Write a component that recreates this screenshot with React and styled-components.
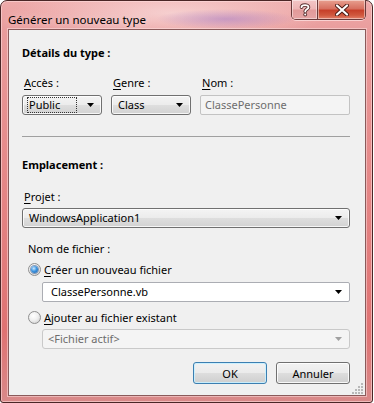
import React from "react";
import styled, { createGlobalStyle, css } from "styled-components";

const Global = createGlobalStyle`
  html, body { margin: 0; padding: 0; background: #ffffff; }
  body { font-family: "Noto Sans", "Open Sans", sans-serif; font-size: 11px; color: #000; }
  * { box-sizing: border-box; }
`;

const Window = styled.div`
  position: relative;
  width: 373px;
  height: 403px;
  border: 1px solid #4a2626;
  border-radius: 7px 7px 3px 3px;
  background:
    radial-gradient(ellipse 70px 10px at 225px 18px, rgba(150, 110, 200, 0.45), rgba(150,110,200,0) 100%),
    radial-gradient(ellipse 160px 30px at 170px 12px, rgba(250, 225, 225, 0.7), rgba(250,225,225,0) 100%),
    linear-gradient(180deg, #eeaaaa 0px, #e99c9c 30px, #e48484 200px, #df7272 330px, #d88a8a 403px);
  box-shadow: inset 0 0 0 1px rgba(255, 220, 220, 0.6);
  display: flex;
  flex-direction: column;
  padding: 0 6px 6px 7px;
`;

const TitleBar = styled.div`
  height: 28px;
  display: flex;
  align-items: flex-start;
  justify-content: space-between;
`;

const Title = styled.div`
  font-family: "Noto Sans", sans-serif;
  font-size: 11.5px;
  color: #000;
  margin-top: 11px;
  text-shadow: 0 0 8px rgba(255, 240, 240, 0.9);
`;

const Caption = styled.div`
  display: flex;
  margin-top: -1px;
  border: 1px solid #6a3a3a;
  border-top: none;
  border-radius: 0 0 5px 5px;
  overflow: hidden;
  height: 20px;
  box-shadow: 0 1px 0 rgba(255, 230, 230, 0.7);
`;

const CapBtn = styled.div`
  height: 100%;
  display: flex;
  align-items: center;
  justify-content: center;
  box-shadow: inset 0 0 0 1px rgba(255, 255, 255, 0.45);
  ${(p) =>
    p.$close
      ? css`
          width: 47px;
          background: linear-gradient(180deg, #e8a090 0%, #d77060 45%, #c7402a 55%, #d0583e 80%, #e4806a 100%);
        `
      : css`
          width: 26px;
          border-right: 1px solid #6a3a3a;
          background: linear-gradient(180deg, #f3c6c6 0%, #eeb6b6 45%, #e29a9a 55%, #e6a4a4 100%);
        `}
`;

const Client = styled.div`
  position: relative;
  flex: 1;
  background: #f0f0f0;
  border: 1px solid #8a5a5a;
  box-shadow: 0 0 0 1px rgba(255, 230, 230, 0.5);
  padding: 15px 15px 0 13px;
  display: flex;
  flex-direction: column;
`;

const SectionTitle = styled.div`
  font-weight: bold;
  height: 16px;
  line-height: 16px;
  margin-top: ${(p) => p.$mt || 0}px;
`;

const Label = styled.div`
  height: 16px;
  line-height: 16px;
  padding-left: ${(p) => (p.$indent ? 6 : 2)}px;
  margin-top: ${(p) => p.$mt || 0}px;
`;

const Key = styled.span`
  text-decoration: underline;
  text-underline-offset: 2px;
`;

const FieldsRow = styled.div`
  display: grid;
  grid-template-columns: 80px 80px 1fr;
  column-gap: 9px;
  margin-top: 14px;
`;

const Field = styled.div`
  display: flex;
  flex-direction: column;
  gap: 4px;
`;

const Combo = styled.div`
  height: 20px;
  border-radius: 3px;
  display: flex;
  align-items: center;
  justify-content: space-between;
  padding: 0 7px 0 4px;
  margin-top: ${(p) => p.$mt || 0}px;
  margin-left: ${(p) => p.$ml || 0}px;
  ${(p) =>
    p.$variant === "edit"
      ? css`
          background: #ffffff;
          border: 1px solid #abadb3;
          border-radius: 2px;
          padding-left: 6px;
        `
      : p.$variant === "disabled"
      ? css`
          background: #f4f4f4;
          border: 1px solid #c9c9c9;
          color: #6d6d6d;
          padding-left: 3px;
        `
      : css`
          background: linear-gradient(180deg, #f4f4f4 0%, #ececec 48%, #dedede 52%, #d2d2d2 100%);
          border: 1px solid #707070;
          box-shadow: inset 0 0 0 1px rgba(255, 255, 255, 0.8);
        `}
`;

const ComboText = styled.span`
  line-height: 14px;
  padding: 0 1px;
  border: 1px dotted ${(p) => (p.$focus ? "#333" : "transparent")};
  flex: ${(p) => (p.$focus ? 1 : "none")};
  margin-right: ${(p) => (p.$focus ? 10 : 0)}px;
`;

const TextBox = styled.div`
  height: 20px;
  border: 1px solid #c3c3c3;
  border-radius: 2px;
  background: #f4f4f4;
  color: #6d6d6d;
  line-height: 18px;
  padding-left: 4px;
`;

const Separator = styled.div`
  height: 1px;
  background: #a0a0a0;
  margin-top: 21px;
`;

const RadioRow = styled.div`
  display: flex;
  align-items: center;
  gap: 3px;
  height: 16px;
  margin-top: ${(p) => p.$mt || 0}px;
  padding-left: 6px;
`;

const RadioCircle = styled.div`
  width: 13px;
  height: 13px;
  border-radius: 50%;
  border: 1px solid #8f8f8f;
  background: radial-gradient(circle at 40% 35%, #ffffff 0%, #f0f0f0 45%, #c8c8c8 100%);
  display: flex;
  align-items: center;
  justify-content: center;
`;

const RadioDot = styled.div`
  width: 7px;
  height: 7px;
  border-radius: 50%;
  background: radial-gradient(circle at 40% 35%, #cde8ff 0%, #3d95e0 45%, #1c5ea8 100%);
  box-shadow: 0 0 0 1px rgba(30, 70, 130, 0.5);
`;

const ButtonRow = styled.div`
  display: flex;
  justify-content: flex-end;
  gap: 9px;
  margin-top: 13px;
`;

const Button = styled.div`
  width: 74px;
  height: 22px;
  border-radius: 3px;
  display: flex;
  align-items: center;
  justify-content: center;
  border: 1px solid ${(p) => (p.$default ? "#3c7fb1" : "#707070")};
  background: linear-gradient(180deg, #f2f2f2 0%, #ebebeb 48%, #dddddd 52%, #cfcfcf 100%);
  box-shadow: inset 0 0 0 1px ${(p) => (p.$default ? "rgba(200,240,255,0.9)" : "rgba(255,255,255,0.85)")};
`;

const Grip = styled.svg`
  position: absolute;
  right: 1px;
  bottom: 1px;
`;

const Arrow = ({ color = "#000" }) => (
  <svg width="7" height="4" viewBox="0 0 7 4">
    <path d="M0 0 H7 L3.5 4 Z" fill={color} />
  </svg>
);

const Radio = ({ checked }) => (
  <RadioCircle>{checked && <RadioDot />}</RadioCircle>
);

export default function App() {
  return (
    <>
      <Global />
      <Window>
        <TitleBar>
          <Title>Générer un nouveau type</Title>
          <Caption>
            <CapBtn>
              <svg width="12" height="14" viewBox="0 0 12 14">
                <path
                  d="M2.5 4.2 C2.5 1.5 9.5 1.2 9.5 4.2 C9.5 6.2 6.2 6.4 6.2 8.6"
                  fill="none"
                  stroke="#5a3030"
                  strokeWidth="3.6"
                  strokeLinecap="round"
                />
                <circle cx="6.2" cy="11.6" r="1.9" fill="#5a3030" />
                <path
                  d="M2.5 4.2 C2.5 1.5 9.5 1.2 9.5 4.2 C9.5 6.2 6.2 6.4 6.2 8.6"
                  fill="none"
                  stroke="#ffffff"
                  strokeWidth="1.8"
                  strokeLinecap="round"
                />
                <circle cx="6.2" cy="11.6" r="1" fill="#ffffff" />
              </svg>
            </CapBtn>
            <CapBtn $close>
              <svg width="14" height="12" viewBox="0 0 14 12">
                <path d="M2 1.5 L12 10.5 M12 1.5 L2 10.5" stroke="#4a1a14" strokeWidth="4" strokeLinecap="round" />
                <path d="M2 1.5 L12 10.5 M12 1.5 L2 10.5" stroke="#ffffff" strokeWidth="2.2" strokeLinecap="round" />
              </svg>
            </CapBtn>
          </Caption>
        </TitleBar>

        <Client>
          <SectionTitle>Détails du type :</SectionTitle>
          <FieldsRow>
            <Field>
              <Label>
                <Key>A</Key>ccès :
              </Label>
              <Combo>
                <ComboText $focus>Public</ComboText>
                <Arrow />
              </Combo>
            </Field>
            <Field>
              <Label>
                <Key>G</Key>enre :
              </Label>
              <Combo>
                <ComboText>Class</ComboText>
                <Arrow />
              </Combo>
            </Field>
            <Field>
              <Label>
                <Key>N</Key>om :
              </Label>
              <TextBox>ClassePersonne</TextBox>
            </Field>
          </FieldsRow>

          <Separator />

          <SectionTitle $mt={20}>Emplacement :</SectionTitle>
          <Label $mt={16}>
            <Key>P</Key>rojet :
          </Label>
          <Combo $mt={3}>
            <ComboText>WindowsApplication1</ComboText>
            <Arrow />
          </Combo>

          <Label $mt={13} $indent>
            Nom de fichier :
          </Label>
          <RadioRow $mt={4}>
            <Radio checked />
            <span>
              <Key>C</Key>réer un nouveau fichier
            </span>
          </RadioRow>
          <Combo $variant="edit" $mt={5} $ml={20}>
            <ComboText>ClassePersonne.vb</ComboText>
            <Arrow />
          </Combo>
          <RadioRow $mt={7}>
            <Radio />
            <span>
              <Key>A</Key>jouter au fichier existant
            </span>
          </RadioRow>
          <Combo $variant="disabled" $mt={4} $ml={20}>
            <ComboText>&lt;Fichier actif&gt;</ComboText>
            <Arrow color="#a0a0a0" />
          </Combo>

          <ButtonRow>
            <Button $default>OK</Button>
            <Button>Annuler</Button>
          </ButtonRow>

          <Grip width="12" height="12" viewBox="0 0 12 12">
            {[
              [9, 1],
              [9, 4],
              [6, 4],
              [9, 7],
              [6, 7],
              [3, 7],
              [9, 10],
              [6, 10],
              [3, 10],
              [0, 10],
            ].map(([x, y], i) => (
              <rect key={i} x={x} y={y} width="2" height="2" fill="#b8b8b8" />
            ))}
          </Grip>
        </Client>
      </Window>
    </>
  );
}
